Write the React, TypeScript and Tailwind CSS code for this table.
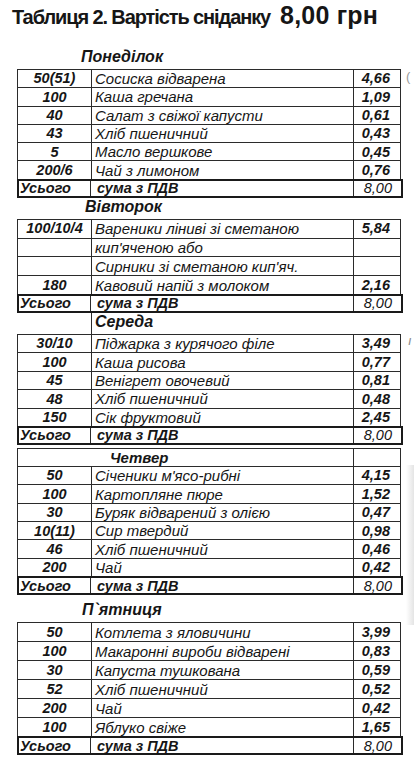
import React from "react";

type Item = { g: string; n: string; p: string };

const line = "border-[#2b2b2b]";

function Row({ item, h }: { item: Item; h: string }) {
  return (
    <div className={`grid grid-cols-[74px_262px_46px] border-b ${line} ${h}`}>
      <div className={`flex items-center justify-center border-r ${line} text-[14.5px] leading-none font-bold italic`}>{item.g}</div>
      <div className={`flex items-center border-r ${line} pl-[3px] text-[15px] leading-none italic`}>{item.n}</div>
      <div className="flex items-center justify-end pr-[10px] text-[14.5px] leading-none font-bold italic">{item.p}</div>
    </div>
  );
}

function Total({ h }: { h: string }) {
  return (
    <div className={`-mt-px ml-[17px] grid w-[386px] grid-cols-[72px_263px_47px] border-2 border-[#1a1a1a] ${h}`}>
      <div className={`flex items-center border-r ${line} pl-[1px] text-[14.5px] leading-none font-bold italic`}>Усього</div>
      <div className={`flex items-center border-r ${line} pl-[6px] text-[14.5px] leading-none font-bold italic`}>сума з ПДВ</div>
      <div className="flex items-center justify-end pr-[9px] text-[14.5px] leading-none italic">8,00</div>
    </div>
  );
}

const mon: Item[] = [
  { g: "50(51)", n: "Сосиска відварена", p: "4,66" },
  { g: "100", n: "Каша гречана", p: "1,09" },
  { g: "40", n: "Салат з свіжої капусти", p: "0,61" },
  { g: "43", n: "Хліб пшеничний", p: "0,43" },
  { g: "5", n: "Масло вершкове", p: "0,45" },
  { g: "200/6", n: "Чай з лимоном", p: "0,76" },
];

const tue: Item[] = [
  { g: "100/10/4", n: "Вареники ліниві зі сметаною", p: "5,84" },
  { g: "", n: "кип'яченою або", p: "" },
  { g: "", n: "Сирники зі сметаною кип'яч.", p: "" },
  { g: "180", n: "Кавовий напій з молоком", p: "2,16" },
];

const wed: Item[] = [
  { g: "30/10", n: "Піджарка з курячого філе", p: "3,49" },
  { g: "100", n: "Каша рисова", p: "0,77" },
  { g: "45", n: "Венігрет овочевий", p: "0,81" },
  { g: "48", n: "Хліб пшеничний", p: "0,48" },
  { g: "150", n: "Сік фруктовий", p: "2,45" },
];

const thu: Item[] = [
  { g: "50", n: "Січеники м'ясо-рибні", p: "4,15" },
  { g: "100", n: "Картопляне пюре", p: "1,52" },
  { g: "30", n: "Буряк відварений з олією", p: "0,47" },
  { g: "10(11)", n: "Сир твердий", p: "0,98" },
  { g: "46", n: "Хліб пшеничний", p: "0,46" },
  { g: "200", n: "Чай", p: "0,42" },
];

const fri: Item[] = [
  { g: "50", n: "Котлета з яловичини", p: "3,99" },
  { g: "100", n: "Макаронні вироби відварені", p: "0,83" },
  { g: "30", n: "Капуста тушкована", p: "0,59" },
  { g: "52", n: "Хліб пшеничний", p: "0,52" },
  { g: "200", n: "Чай", p: "0,42" },
  { g: "100", n: "Яблуко свіже", p: "1,65" },
];

function Body({ items, h }: { items: Item[]; h: string }) {
  return (
    <div className={`ml-[17px] w-[384px] border-x border-t ${line}`}>
      {items.map((it, i) => (
        <Row key={i} item={it} h={h} />
      ))}
    </div>
  );
}

export default function App() {
  return (
    <div className="relative min-h-[773px] w-[414px] bg-white font-['Liberation_Sans',Arial,sans-serif] text-[#161616]">
      <div className="flex h-[30px] items-baseline pl-[12px]">
        <span className="text-[20px] leading-[24px] font-bold tracking-[-1.1px]">Таблиця 2. Вартість сніданку</span>
        <span className="ml-[10px] text-[25px] leading-[30px] font-bold tracking-[0.2px]">8,00 грн</span>
      </div>

      <div className="mt-[18px]">
        <div className="flex h-[21px] items-end pb-[4px] pl-[81px] text-[16px] leading-none font-bold italic">Понеділок</div>
        <Body items={mon} h="h-[18.3px]" />
        <Total h="h-[19px]" />

        <div className="flex h-[21px] items-end pb-[4px] pl-[85px] text-[16px] leading-none font-bold italic">Вівторок</div>
        <Body items={tue} h="h-[18.8px]" />
        <Total h="h-[19px]" />

        <div className="flex h-[21px]">
          <div className={`ml-[91px] flex items-end border-l ${line} pb-[4px] pl-[3px] text-[16px] leading-none font-bold italic`}>Середа</div>
        </div>
        <Body items={wed} h="h-[18.4px]" />
        <Total h="h-[19px]" />

        <div className="h-[3px]" />
        <div className={`ml-[17px] w-[384px] border-x border-t ${line}`}>
          <div className={`grid h-[18px] grid-cols-[336px_46px] border-b ${line}`}>
            <div className={`flex items-center border-r ${line} pl-[92px] text-[15px] leading-none font-bold italic`}>Четвер</div>
            <div />
          </div>
          {thu.map((it, i) => (
            <Row key={i} item={it} h="h-[18.4px]" />
          ))}
        </div>
        <Total h="h-[19px]" />

        <div className="flex h-[27px] items-end pb-[4px] pl-[82px] text-[16px] leading-none font-bold italic">П`ятниця</div>
        <Body items={fri} h="h-[19px]" />
        <Total h="h-[19px]" />
      </div>

      <span className="absolute left-[406px] top-[70px] text-[13px] leading-none text-[#9a9a9a]">(</span>
      <span className="absolute left-[408px] top-[334px] text-[13px] leading-none italic text-[#8a8a8a]">ı</span>
      <div className="absolute right-0 top-[465px] h-[160px] w-[8px] bg-gradient-to-l from-[#e4e4e4] to-white" />
    </div>
  );
}
